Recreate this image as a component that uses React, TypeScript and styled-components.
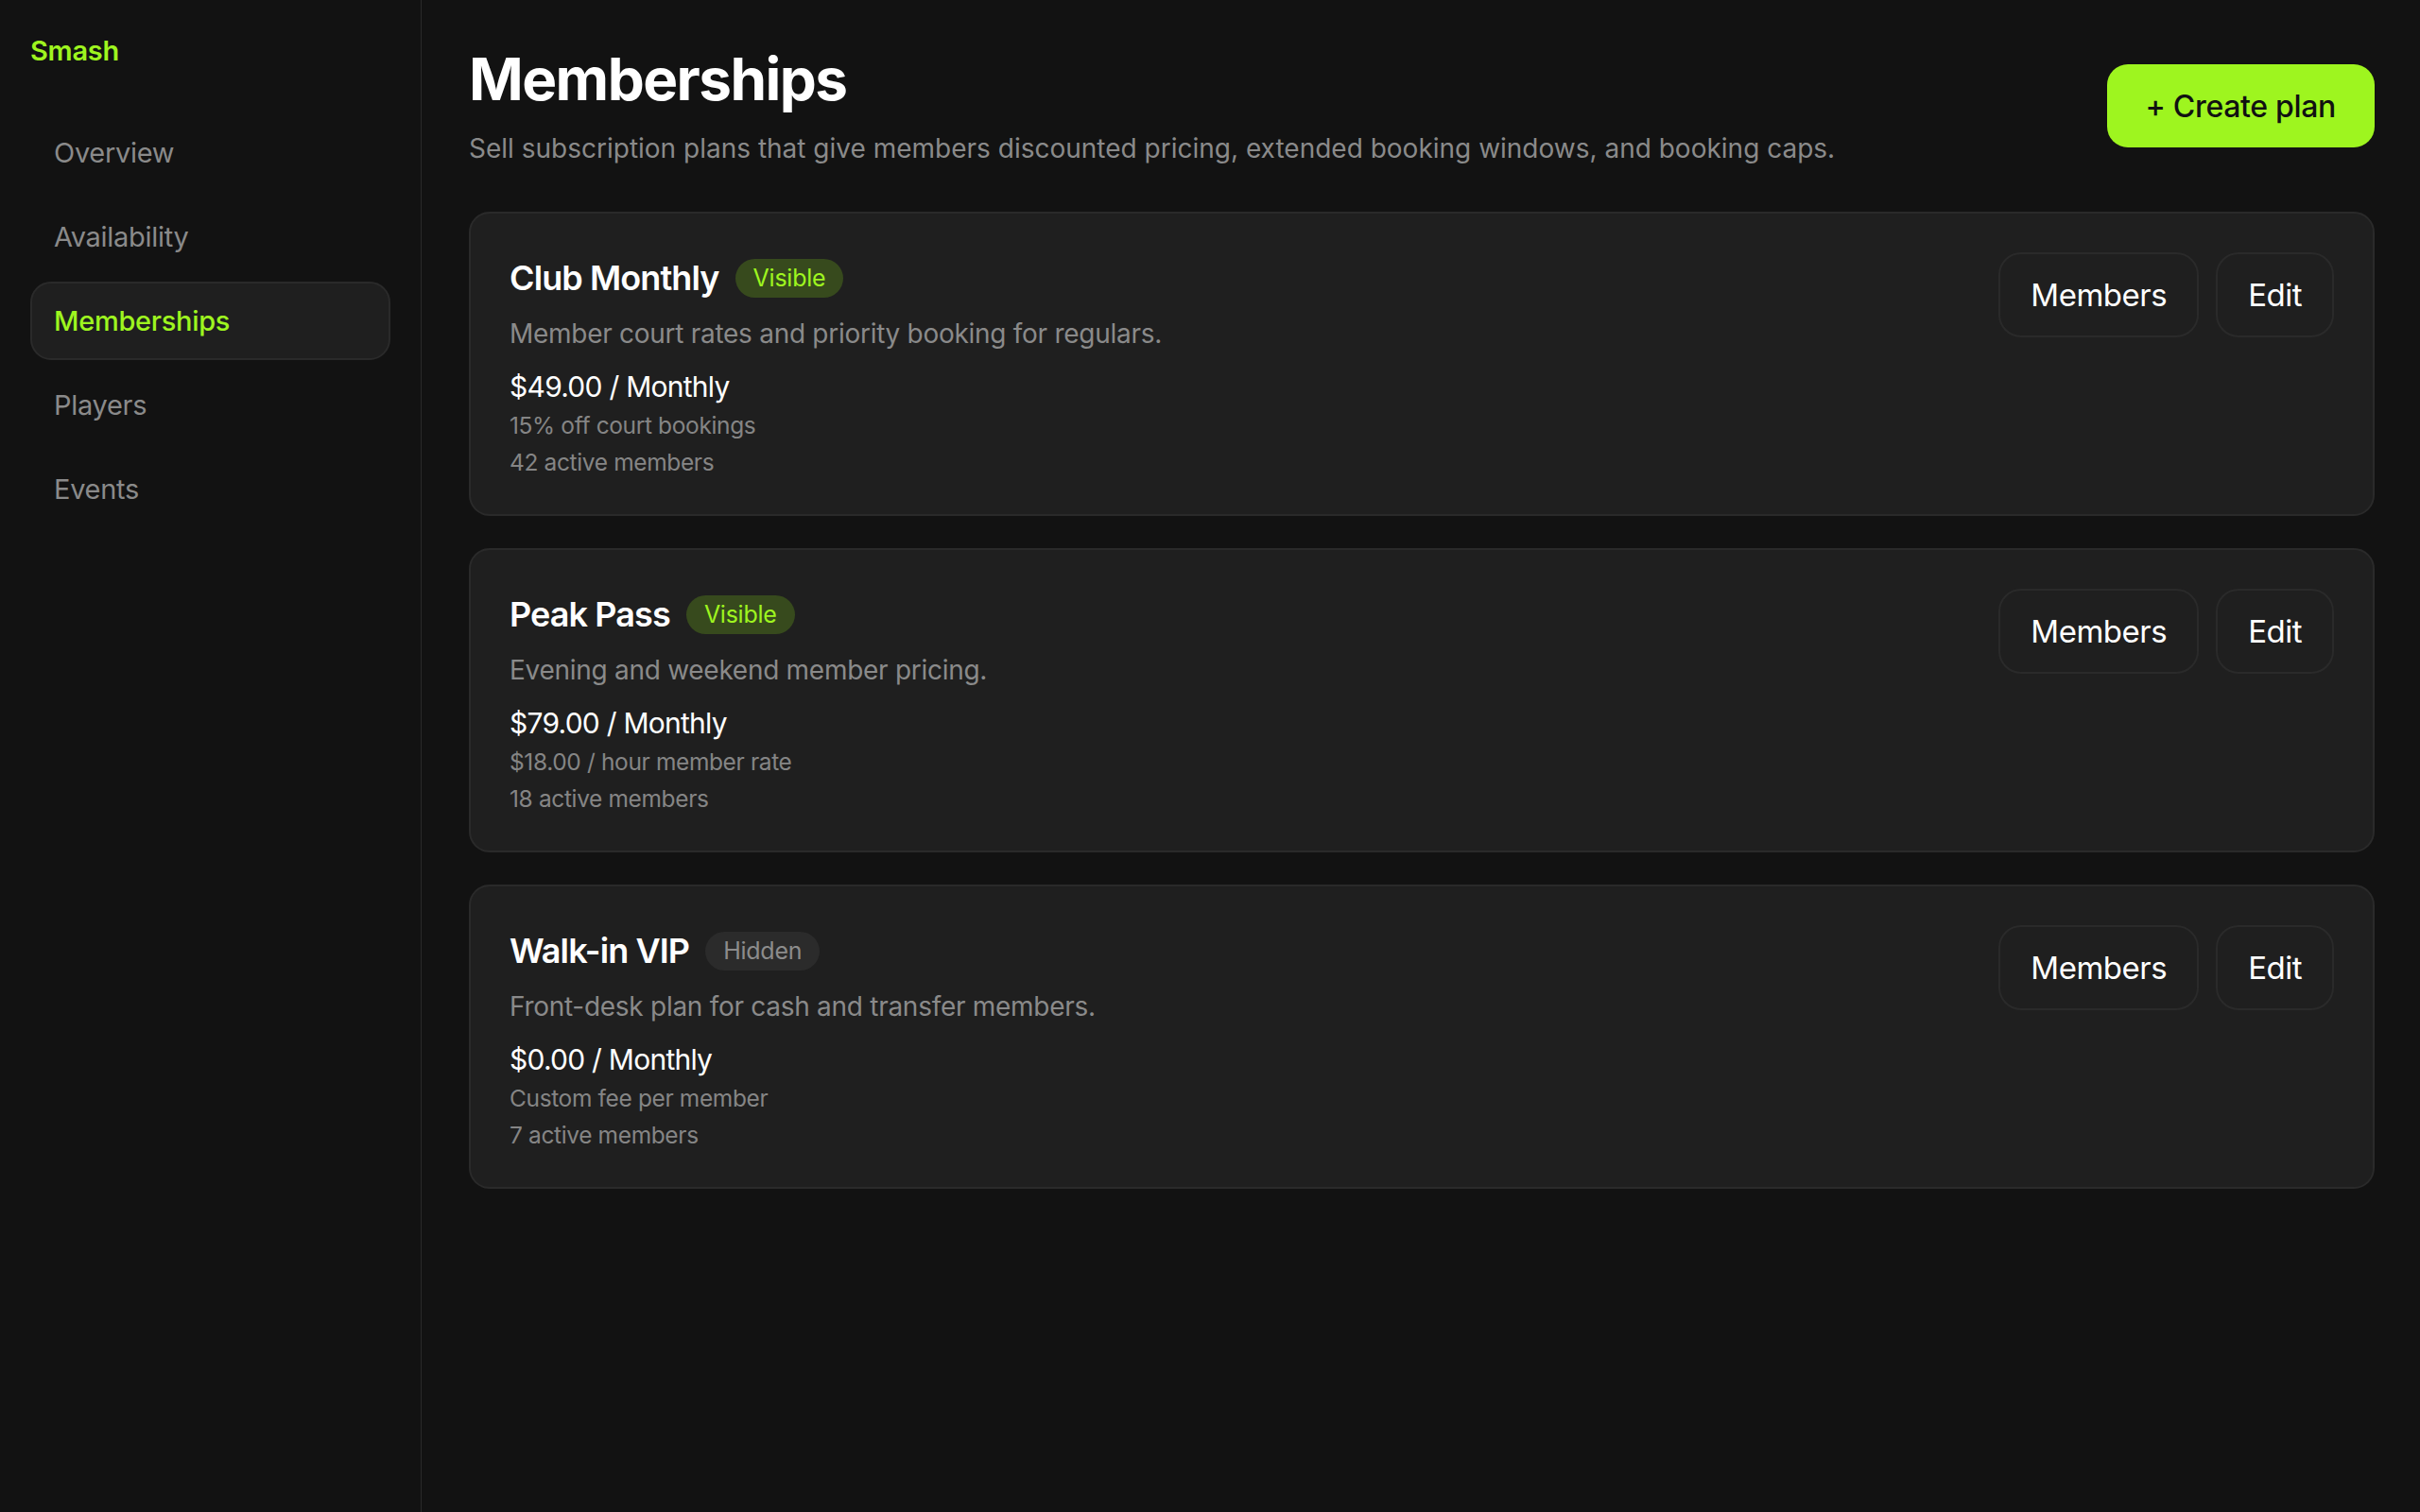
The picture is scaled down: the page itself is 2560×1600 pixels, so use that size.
import { createGlobalStyle } from 'styled-components';
import styled from 'styled-components';

const GlobalStyle = createGlobalStyle`
  html, body {
    margin: 0;
    padding: 0;
    background: #121212;
  }
  body {
    font-family: Inter, 'Noto Sans', sans-serif;
    color: #ffffff;
  }
  * {
    box-sizing: border-box;
  }
  p, h1, h2 {
    margin: 0;
  }
`;

const Layout = styled.div`
  display: flex;
  min-height: 100vh;
  background: #121212;
`;

const Sidebar = styled.aside`
  width: 446px;
  flex-shrink: 0;
  border-right: 1px solid #2a2a2a;
  padding: 34px 32px;
  display: flex;
  flex-direction: column;
`;

const Logo = styled.div`
  font-size: 29px;
  line-height: 40px;
  font-weight: 600;
  color: #9ef51f;
  margin-bottom: 46px;
  letter-spacing: -0.01em;
`;

const Nav = styled.nav`
  display: flex;
  flex-direction: column;
  gap: 6px;
`;

const NavItem = styled.div<{ $active?: boolean }>`
  height: 83px;
  display: flex;
  align-items: center;
  padding: 0 23px;
  border-radius: 22px;
  font-size: 29px;
  letter-spacing: -0.01em;
  font-weight: ${({ $active }) => ($active ? 500 : 400)};
  color: ${({ $active }) => ($active ? '#9ef51f' : '#8a8a8a')};
  background: ${({ $active }) => ($active ? '#1f1f1f' : 'transparent')};
  border: 2px solid ${({ $active }) => ($active ? '#2a2a2a' : 'transparent')};
`;

const Main = styled.main`
  flex: 1;
  padding: 44px 48px 48px 50px;
  display: flex;
  flex-direction: column;
`;

const Header = styled.div`
  display: flex;
  justify-content: space-between;
  align-items: flex-start;
  margin-bottom: 47px;
`;

const Title = styled.h1`
  font-size: 62px;
  line-height: 80px;
  font-weight: 700;
  letter-spacing: -0.025em;
`;

const Subtitle = styled.p`
  margin-top: 13px;
  font-size: 28px;
  line-height: 40px;
  color: #8a8a8a;
  letter-spacing: 0;
`;

const CreateButton = styled.button`
  margin-top: 24px;
  height: 88px;
  padding: 0 41px;
  border: none;
  border-radius: 22px;
  background: #9ef51f;
  color: #111111;
  font-family: inherit;
  font-size: 32px;
  font-weight: 500;
  letter-spacing: -0.01em;
  cursor: pointer;
`;

const CardList = styled.div`
  display: flex;
  flex-direction: column;
  gap: 34px;
`;

const Card = styled.div`
  display: flex;
  justify-content: space-between;
  align-items: flex-start;
  padding: 41px 41px 37px 41px;
  background: #1f1f1f;
  border: 2px solid #2a2a2a;
  border-radius: 22px;
`;

const CardBody = styled.div`
  display: flex;
  flex-direction: column;
`;

const TitleRow = styled.div`
  display: flex;
  align-items: center;
  gap: 17px;
  height: 54px;
`;

const PlanName = styled.h2`
  font-size: 36px;
  font-weight: 600;
  letter-spacing: -0.025em;
`;

const Badge = styled.span<{ $visible?: boolean }>`
  display: inline-flex;
  align-items: center;
  height: 41px;
  padding: 0 19px;
  border-radius: 21px;
  font-size: 25px;
  letter-spacing: -0.01em;
  color: ${({ $visible }) => ($visible ? '#9ef51f' : '#8c8c8c')};
  background: ${({ $visible }) => ($visible ? '#374a1d' : '#2b2b2b')};
`;

const Description = styled.p`
  margin-top: 12px;
  font-size: 28px;
  line-height: 40px;
  color: #8a8a8a;
  letter-spacing: -0.01em;
`;

const Price = styled.p`
  margin-top: 16px;
  font-size: 30px;
  line-height: 40px;
  letter-spacing: -0.025em;
`;

const Detail = styled.p`
  margin-top: 3px;
  font-size: 24.5px;
  line-height: 36px;
  color: #858585;
  letter-spacing: -0.015em;
`;

const Actions = styled.div`
  display: flex;
  gap: 18px;
`;

const GhostButton = styled.button`
  height: 90px;
  padding: 0 32px;
  background: #1f1f1f;
  border: 2px solid #2a2a2a;
  border-radius: 24px;
  color: #ffffff;
  font-family: inherit;
  font-size: 33px;
  letter-spacing: -0.015em;
  cursor: pointer;
`;

interface Plan {
  name: string;
  visible: boolean;
  description: string;
  price: string;
  perk: string;
  members: number;
}

const plans: Plan[] = [
  {
    name: 'Club Monthly',
    visible: true,
    description: 'Member court rates and priority booking for regulars.',
    price: '$49.00 / Monthly',
    perk: '15% off court bookings',
    members: 42,
  },
  {
    name: 'Peak Pass',
    visible: true,
    description: 'Evening and weekend member pricing.',
    price: '$79.00 / Monthly',
    perk: '$18.00 / hour member rate',
    members: 18,
  },
  {
    name: 'Walk-in VIP',
    visible: false,
    description: 'Front-desk plan for cash and transfer members.',
    price: '$0.00 / Monthly',
    perk: 'Custom fee per member',
    members: 7,
  },
];

const navItems = ['Overview', 'Availability', 'Memberships', 'Players', 'Events'];

const PlanCard = ({ plan }: { plan: Plan }) => (
  <Card>
    <CardBody>
      <TitleRow>
        <PlanName>{plan.name}</PlanName>
        <Badge $visible={plan.visible}>{plan.visible ? 'Visible' : 'Hidden'}</Badge>
      </TitleRow>
      <Description>{plan.description}</Description>
      <Price>{plan.price}</Price>
      <Detail>{plan.perk}</Detail>
      <Detail>{plan.members} active members</Detail>
    </CardBody>
    <Actions>
      <GhostButton>Members</GhostButton>
      <GhostButton>Edit</GhostButton>
    </Actions>
  </Card>
);

const App = () => {
  return (
    <>
      <GlobalStyle />
      <Layout>
        <Sidebar>
          <Logo>Smash</Logo>
          <Nav>
            {navItems.map((item) => (
              <NavItem key={item} $active={item === 'Memberships'}>
                {item}
              </NavItem>
            ))}
          </Nav>
        </Sidebar>
        <Main>
          <Header>
            <div>
              <Title>Memberships</Title>
              <Subtitle>
                Sell subscription plans that give members discounted pricing, extended booking
                windows, and booking caps.
              </Subtitle>
            </div>
            <CreateButton>+ Create plan</CreateButton>
          </Header>
          <CardList>
            {plans.map((plan) => (
              <PlanCard key={plan.name} plan={plan} />
            ))}
          </CardList>
        </Main>
      </Layout>
    </>
  );
};

export default App;
